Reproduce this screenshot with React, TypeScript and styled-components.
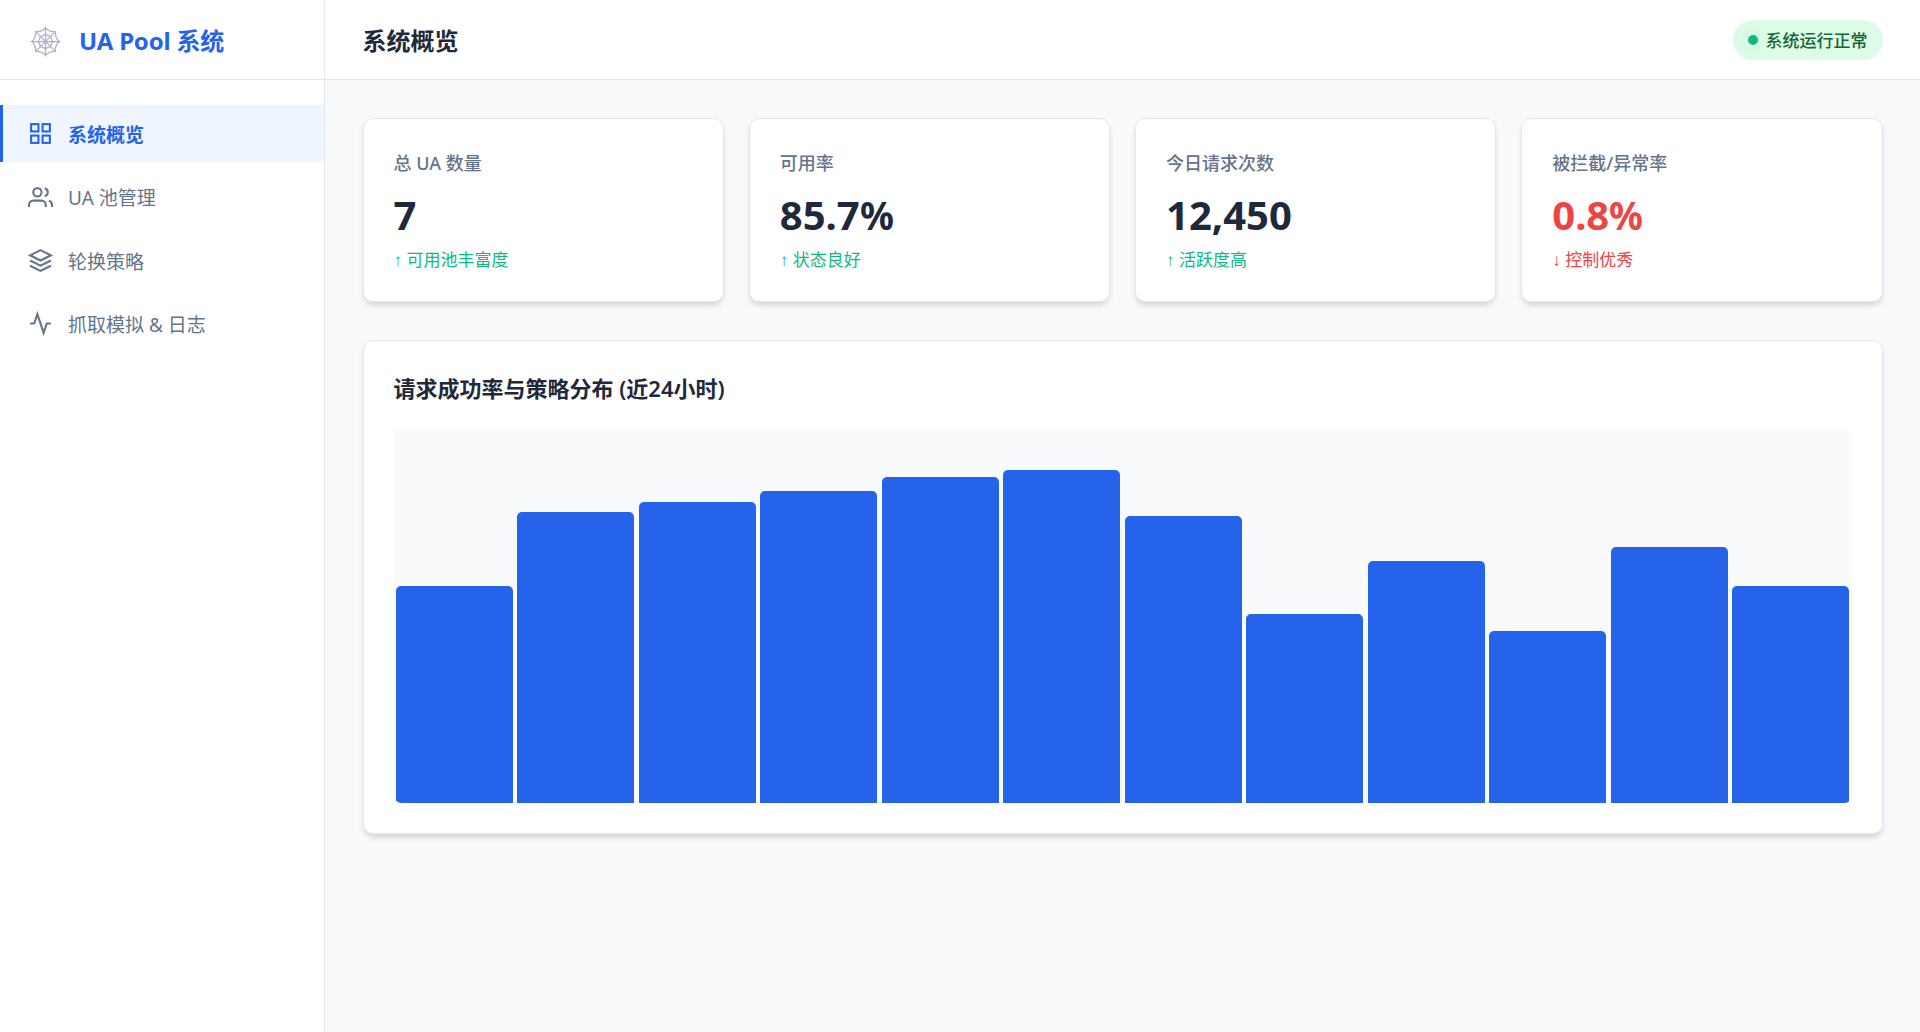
import React from 'react';
import styled, { createGlobalStyle } from 'styled-components';

const GlobalStyle = createGlobalStyle`
  * { box-sizing: border-box; margin: 0; padding: 0; }
  body {
    font-family: 'Noto Sans', 'Noto Sans CJK SC', sans-serif;
    background: #f8fafc;
    color: #1e293b;
    overflow: hidden;
  }
`;

const Layout = styled.div`
  display: flex;
  height: 100vh;
`;

const Sidebar = styled.aside`
  width: 325px;
  flex: none;
  background: #fff;
  border-right: 1px solid #e2e8f0;
`;

const Brand = styled.div`
  height: 80px;
  display: flex;
  align-items: center;
  gap: 18px;
  padding: 0 30px;
  border-bottom: 1px solid #e2e8f0;
  color: #2563eb;
  font-size: 24px;
  font-weight: 700;
  letter-spacing: -0.2px;
`;

const WebLogo = styled.svg`
  width: 31px;
  height: 31px;
  flex: none;
  margin-top: 3px;
  fill: none;
  stroke: #b8adc5;
  stroke-width: 1.25;
`;

const Nav = styled.nav`
  display: flex;
  flex-direction: column;
  gap: 6.25px;
  padding-top: 25px;
`;

const NavItem = styled.a<{ $active?: boolean }>`
  display: flex;
  align-items: center;
  gap: 15px;
  height: 57.2px;
  padding: 0 25px;
  border-left: 3px solid ${(p) => (p.$active ? '#2563eb' : 'transparent')};
  background: ${(p) => (p.$active ? '#eff6ff' : 'transparent')};
  color: ${(p) => (p.$active ? '#2563eb' : '#64748b')};
  font-size: 19px;
  font-weight: ${(p) => (p.$active ? 600 : 400)};
`;

const NavIcon = styled.svg`
  width: 25px;
  height: 25px;
  flex: none;
  fill: none;
  stroke: currentColor;
  stroke-width: 2;
`;

const NavLabel = styled.span`
  padding-top: 0.6px;
`;

const Main = styled.main`
  flex: 1;
  min-width: 0;
`;

const Header = styled.header`
  height: 80px;
  display: flex;
  align-items: center;
  justify-content: space-between;
  padding: 0 37.5px;
  background: #fff;
  border-bottom: 1px solid #e2e8f0;
`;

const PageTitle = styled.h1`
  font-size: 24px;
  font-weight: 600;
`;

const Status = styled.div`
  display: flex;
  align-items: center;
  gap: 7.5px;
  height: 40px;
  padding: 0 15px;
  border-radius: 25px;
  background: #dcfce7;
  color: #166534;
  font-size: 17px;
  font-weight: 500;
`;

const StatusDot = styled.span`
  width: 10px;
  height: 10px;
  border-radius: 50%;
  background: #10b981;
  box-shadow: 0 0 0 7px rgba(16, 185, 129, 0.025);
`;

const Content = styled.div`
  display: flex;
  flex-direction: column;
  gap: 37.5px;
  padding: 37.5px;
`;

const StatGrid = styled.div`
  display: grid;
  grid-template-columns: repeat(4, 1fr);
  gap: 25px;
`;

const Card = styled.section`
  padding: 30px;
  background: #fff;
  border: 1px solid #e2e8f0;
  border-radius: 10px;
  box-shadow: 0 5px 7.5px -1px rgba(0, 0, 0, 0.1), 0 2.5px 5px -1px rgba(0, 0, 0, 0.06);
`;

const StatCard = styled(Card)`
  height: 184.5px;
  padding-top: 31px;
`;

const StatLabel = styled.div`
  font-size: 18px;
  font-weight: 500;
  line-height: 27px;
  color: #64748b;
`;

const StatValue = styled.div<{ $danger?: boolean }>`
  margin-top: 10px;
  font-size: 40px;
  font-weight: 700;
  line-height: 55px;
  color: ${(p) => (p.$danger ? '#ef4444' : '#1e293b')};
`;

const Unit = styled.span`
  display: inline-block;
  transform: scaleX(0.94);
  transform-origin: left;
`;

const StatTrend = styled.div<{ $danger?: boolean }>`
  margin-top: 6px;
  font-size: 17px;
  line-height: 24px;
  color: ${(p) => (p.$danger ? '#ef4444' : '#10b981')};
`;

const Arrow = styled.span`
  font-family: 'Liberation Sans', sans-serif;
  line-height: 1;
`;

const ChartTitle = styled.h2`
  height: 57px;
  font-size: 22px;
  font-weight: 600;
  line-height: 34px;
`;

const Chart = styled.div`
  display: flex;
  align-items: flex-end;
  height: 375px;
  overflow: hidden;
  background: #f8fafc;
  border-radius: 7.5px;
`;

const Bar = styled.div`
  flex: 1;
  margin: 0 2.4px;
  border-radius: 5px 5px 0 0;
  background: #2563eb;
`;

const navItems = [
  {
    label: '系统概览',
    icon: (
      <>
        <rect x="3" y="3" width="7" height="7" />
        <rect x="14" y="3" width="7" height="7" />
        <rect x="14" y="14" width="7" height="7" />
        <rect x="3" y="14" width="7" height="7" />
      </>
    ),
  },
  {
    label: 'UA 池管理',
    icon: (
      <>
        <path d="M17 21v-2a4 4 0 0 0-4-4H5a4 4 0 0 0-4 4v2" />
        <circle cx="9" cy="7" r="4" />
        <path d="M23 21v-2a4 4 0 0 0-3-3.87" />
        <path d="M16 3.13a4 4 0 0 1 0 7.75" />
      </>
    ),
  },
  {
    label: '轮换策略',
    icon: (
      <>
        <polygon points="12 2 2 7 12 12 22 7 12 2" />
        <polyline points="2 17 12 22 22 17" />
        <polyline points="2 12 12 17 22 12" />
      </>
    ),
  },
  {
    label: '抓取模拟 & 日志',
    icon: <polyline points="22 12 18 12 15 21 9 3 6 12 2 12" />,
  },
];

const stats = [
  { label: '总 UA 数量', value: '7', arrow: '↑', trend: '可用池丰富度' },
  { label: '可用率', value: '85.7', unit: '%', arrow: '↑', trend: '状态良好' },
  { label: '今日请求次数', value: '12,450', arrow: '↑', trend: '活跃度高' },
  { label: '被拦截/异常率', value: '0.8', unit: '%', arrow: '↓', trend: '控制优秀', danger: true },
];

const successRates = [62, 83, 86, 89, 93, 95, 82, 54, 69, 49, 73, 62];
const BAR_SCALE = 3.5;

export default function App() {
  return (
    <>
      <GlobalStyle />
      <Layout>
        <Sidebar>
          <Brand>
            <WebLogo viewBox="-15.5 -15.5 31 31">
              <path d="M0-15V15M-15 0H15M-10.4-10.4L10.4 10.4M10.4-10.4L-10.4 10.4" />
              <path d="M0-13.5Q4-9.5 9.8-9.8Q9.5-4 13.5 0Q9.5 4 9.8 9.8Q4 9.5 0 13.5Q-4 9.5-9.8 9.8Q-9.5 4-13.5 0Q-9.5-4-9.8-9.8Q-4-9.5 0-13.5Z" />
              <path d="M0-7.5Q2.2-5.5 5.2-5.2Q5.5-2.2 7.5 0Q5.5 2.2 5.2 5.2Q2.2 5.5 0 7.5Q-2.2 5.5-5.2 5.2Q-5.5 2.2-7.5 0Q-5.5-2.2-5.2-5.2Q-2.2-5.5 0-7.5Z" />
            </WebLogo>
            <span>UA Pool 系统</span>
          </Brand>
          <Nav>
            {navItems.map((item, i) => (
              <NavItem key={item.label} $active={i === 0}>
                <NavIcon viewBox="0 0 24 24">{item.icon}</NavIcon>
                <NavLabel>{item.label}</NavLabel>
              </NavItem>
            ))}
          </Nav>
        </Sidebar>
        <Main>
          <Header>
            <PageTitle>系统概览</PageTitle>
            <Status>
              <StatusDot />
              系统运行正常
            </Status>
          </Header>
          <Content>
            <StatGrid>
              {stats.map((s) => (
                <StatCard key={s.label}>
                  <StatLabel>{s.label}</StatLabel>
                  <StatValue $danger={s.danger}>
                    {s.value}
                    {s.unit && <Unit>{s.unit}</Unit>}
                  </StatValue>
                  <StatTrend $danger={s.danger}>
                    <Arrow>{s.arrow}</Arrow> {s.trend}
                  </StatTrend>
                </StatCard>
              ))}
            </StatGrid>
            <Card>
              <ChartTitle>请求成功率与策略分布 (近24小时)</ChartTitle>
              <Chart>
                {successRates.map((rate, i) => (
                  <Bar key={i} style={{ height: rate * BAR_SCALE }} />
                ))}
              </Chart>
            </Card>
          </Content>
        </Main>
      </Layout>
    </>
  );
}
